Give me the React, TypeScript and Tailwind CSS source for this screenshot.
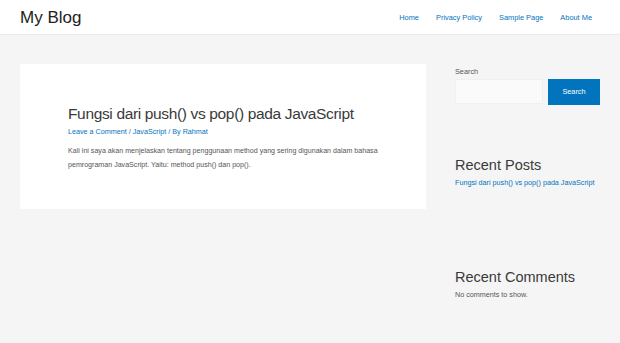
import React from 'react';

const navLinks = ['Home', 'Privacy Policy', 'Sample Page', 'About Me'];

const App = () => {
  return (
    <div className="min-h-[343px] bg-[#f5f5f5] font-['Liberation_Sans',Arial,sans-serif] text-[#3a3a3a]">
      {/* Header */}
      <header className="flex h-[35px] items-center justify-between border-b border-[#eaeaea] bg-white pl-[20px] pr-[28px]">
        <div className="text-[17px] leading-none text-[#222]">My Blog</div>
        <nav className="flex items-center gap-[17px] pt-[1px] text-[7.4px] text-[#0274be]">
          {navLinks.map((l) => (
            <span key={l}>{l}</span>
          ))}
        </nav>
      </header>

      <div className="flex gap-[29px] pl-[20px] pr-[20px] pt-[29px]">
        {/* Main */}
        <main className="w-[406px] shrink-0">
          <article className="h-[145px] bg-white pl-[48px] pr-[30px] pt-[39px]">
            <h2 className="text-[15.5px] leading-[22px] tracking-[-0.35px] text-[#3a3a3a]">
              Fungsi dari push() vs pop() pada JavaScript
            </h2>
            <div className="mt-[1px] text-[7.2px] leading-[11px] text-[#0274be]">
              Leave a Comment / JavaScript / By Rahmat
            </div>
            <p className="mt-[7px] text-[7.1px] leading-[14px] text-[#555]">
              Kali ini saya akan menjelaskan tentang penggunaan method yang sering digunakan dalam bahasa
              pemrograman JavaScript. Yaitu: method push() dan pop().
            </p>
          </article>
        </main>

        {/* Sidebar */}
        <aside className="w-[145px] shrink-0 pt-[3px]">
          <div className="text-[7.3px] leading-[10px] text-[#555]">Search</div>
          <div className="mt-[2px] flex gap-[5px]">
            <input className="h-[25px] w-[88px] border border-[#f0f0f0] bg-[#fafafa]" />
            <button className="h-[26px] w-[52px] bg-[#0274be] text-[7.3px] text-white">Search</button>
          </div>

          <h3 className="mt-[50px] text-[14.5px] leading-[20px] text-[#3a3a3a]">Recent Posts</h3>
          <div className="mt-[2px] text-[7.2px] leading-[11px] text-[#0274be]">
            Fungsi dari push() vs pop() pada JavaScript
          </div>

          <h3 className="mt-[79px] text-[14.5px] leading-[20px] text-[#3a3a3a]">Recent Comments</h3>
          <div className="mt-[2px] text-[7.2px] leading-[11px] text-[#555]">No comments to show.</div>
        </aside>
      </div>
    </div>
  );
};

export default App;
